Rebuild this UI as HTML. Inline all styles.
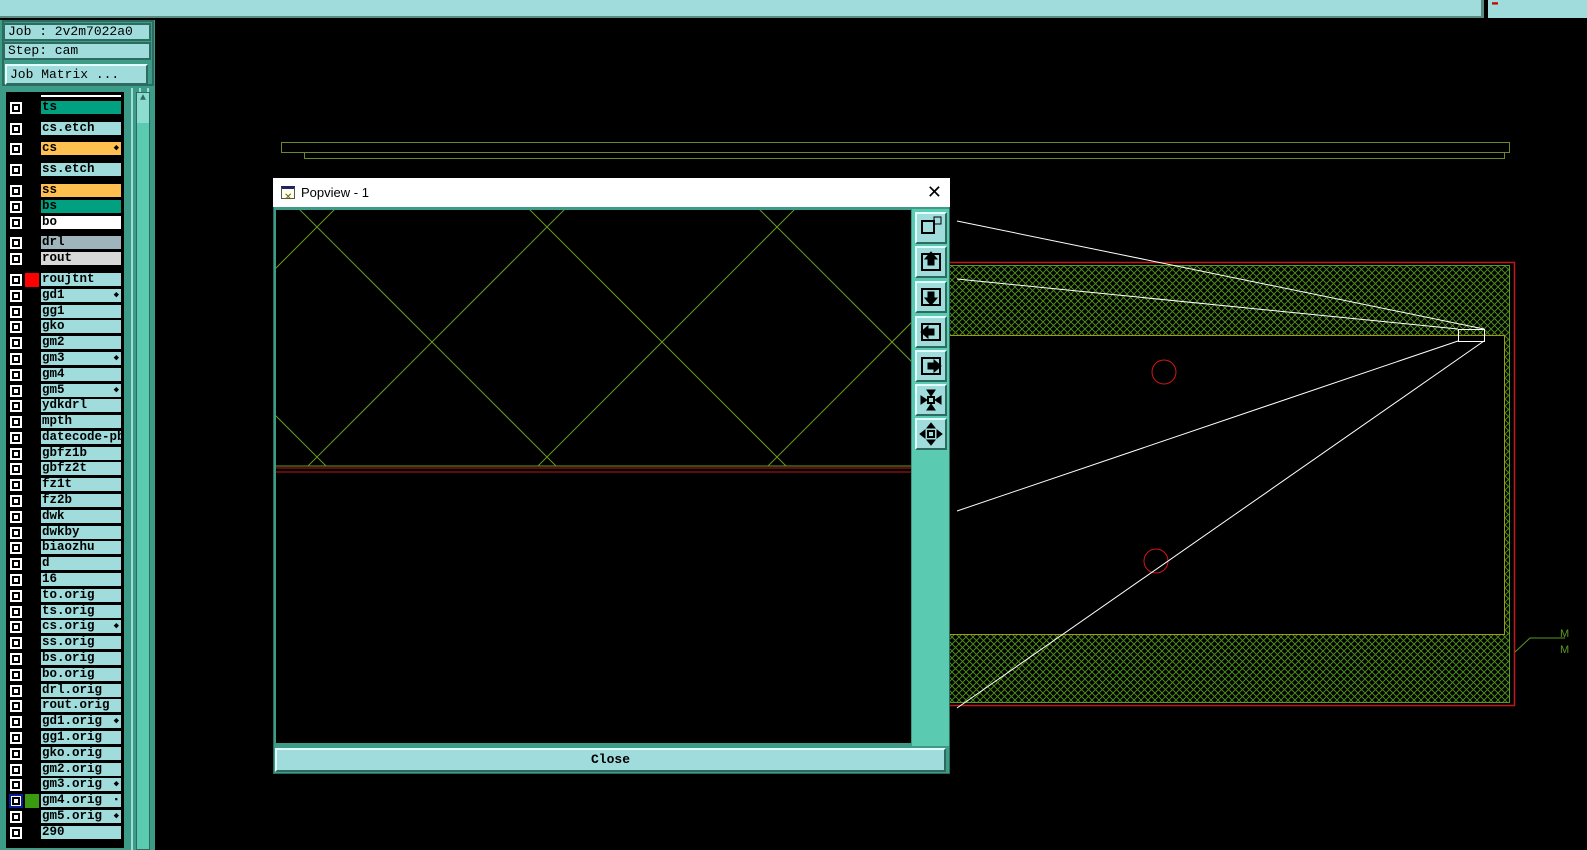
<!DOCTYPE html>
<html><head><meta charset="utf-8"><style>
*{margin:0;padding:0;box-sizing:border-box}
body{width:1587px;height:850px;background:#000;position:relative;overflow:hidden;font-family:"Liberation Mono",monospace;}
.a{position:absolute}
.top{left:0;top:0;width:1484px;height:18px;background:#a0dcdc;border-bottom:2px solid #5a8a84;border-right:3px solid #5a8a84}
.top2{left:1488px;top:0;width:99px;height:18px;background:#a0dcdc}
.lp{left:0;top:20px;width:155px;height:830px;background:#3c9c88}
.hdr{left:3px;width:148px;height:18px;background:#a0dcdc;border:2px solid #2d6b60;font-size:13px;line-height:14px;padding-left:3px;color:#000}
.row{left:9px;height:15px;width:114px}
.cb{position:absolute;left:0;top:1px;width:14px;height:14px;background:#fff;border:1px solid #000}
.cb i{position:absolute;left:2px;top:2px;width:8px;height:8px;border:2px solid #000;background:#fff}
.lb{position:absolute;left:31px;top:0;width:82px;height:15px;background:#a0dcdc;border:1px solid #000;font-size:12.5px;font-weight:bold;line-height:13px;padding-left:1px;white-space:nowrap;overflow:hidden}
.mk{position:absolute;right:2px;top:0;font-size:9px}
.btn{left:915px;width:32px;height:32px;background:#a0dcdc;border:2px solid;border-color:#e0ffff #2d6b60 #2d6b60 #e0ffff}
</style></head><body>
<div class="a top"></div><div class="a top2"><span style="position:absolute;left:4px;top:-2px;color:#c00;font-size:10px">▬</span></div>
<div class="a lp"></div>
<div class="a" style="left:2px;top:20px;width:152px;height:66px;background:#3c9c88;border:2px solid #2d6b60"></div>
<div class="a hdr" style="top:23px">Job : 2v2m7022a0</div>
<div class="a hdr" style="top:42px">Step: cam</div>
<div class="a" style="left:5px;top:64px;width:143px;height:21px;background:#a0dcdc;border:2px solid;border-color:#e0ffff #2d6b60 #2d6b60 #e0ffff;font-size:13px;line-height:17px;padding-left:3px">Job Matrix ...</div>
<div class="a" style="left:4px;top:90px;width:122px;height:760px;background:#000;border:2px solid #3c9c88"></div>
<div class="a" style="left:128px;top:88px;width:27px;height:762px;background:repeating-linear-gradient(90deg,#3c9c88 0 3px,#a0dcdc 3px 5px,#3c9c88 5px 8px)"></div>
<div class="a" style="left:136px;top:92px;width:14px;height:758px;background:#5acbb0;border:1px solid #2d6b60"></div>
<div class="a" style="left:137px;top:93px;width:12px;height:30px;background:#8cdcd0;font-size:10px;text-align:center;color:#2d6b60">▲</div>
<div class="a row" style="top:96px"><div class="lb" style="background:#fff;height:4px;top:-2px"></div></div>
<div class="a row" style="top:100px"><div class="cb"><i></i></div><div class="lb" style="background:#00a080">ts</div></div>
<div class="a row" style="top:121px"><div class="cb"><i></i></div><div class="lb">cs.etch</div></div>
<div class="a row" style="top:141px"><div class="cb"><i></i></div><div class="lb" style="background:#ffc050">cs<span class="mk">◆</span></div></div>
<div class="a row" style="top:162px"><div class="cb"><i></i></div><div class="lb">ss.etch</div></div>
<div class="a row" style="top:183px"><div class="cb"><i></i></div><div class="lb" style="background:#ffc050">ss</div></div>
<div class="a row" style="top:199px"><div class="cb"><i></i></div><div class="lb" style="background:#00a080">bs</div></div>
<div class="a row" style="top:215px"><div class="cb"><i></i></div><div class="lb" style="background:#fff">bo</div></div>
<div class="a row" style="top:235px"><div class="cb"><i></i></div><div class="lb" style="background:#a0b4bc">drl</div></div>
<div class="a row" style="top:251px"><div class="cb"><i></i></div><div class="lb" style="background:#d8d8d8">rout</div></div>
<div class="a row" style="top:272px"><div class="cb"><i></i></div><div style="position:absolute;left:16px;top:1px;width:14px;height:14px;background:#f00"></div><div class="lb">roujtnt</div></div>
<div class="a row" style="top:288px"><div class="cb"><i></i></div><div class="lb">gd1<span class="mk">◆</span></div></div>
<div class="a row" style="top:304px"><div class="cb"><i></i></div><div class="lb">gg1</div></div>
<div class="a row" style="top:319px"><div class="cb"><i></i></div><div class="lb">gko</div></div>
<div class="a row" style="top:335px"><div class="cb"><i></i></div><div class="lb">gm2</div></div>
<div class="a row" style="top:351px"><div class="cb"><i></i></div><div class="lb">gm3<span class="mk">◆</span></div></div>
<div class="a row" style="top:367px"><div class="cb"><i></i></div><div class="lb">gm4</div></div>
<div class="a row" style="top:383px"><div class="cb"><i></i></div><div class="lb">gm5<span class="mk">◆</span></div></div>
<div class="a row" style="top:398px"><div class="cb"><i></i></div><div class="lb">ydkdrl</div></div>
<div class="a row" style="top:414px"><div class="cb"><i></i></div><div class="lb">mpth</div></div>
<div class="a row" style="top:430px"><div class="cb"><i></i></div><div class="lb">datecode-pbe</div></div>
<div class="a row" style="top:446px"><div class="cb"><i></i></div><div class="lb">gbfz1b</div></div>
<div class="a row" style="top:461px"><div class="cb"><i></i></div><div class="lb">gbfz2t</div></div>
<div class="a row" style="top:477px"><div class="cb"><i></i></div><div class="lb">fz1t</div></div>
<div class="a row" style="top:493px"><div class="cb"><i></i></div><div class="lb">fz2b</div></div>
<div class="a row" style="top:509px"><div class="cb"><i></i></div><div class="lb">dwk</div></div>
<div class="a row" style="top:525px"><div class="cb"><i></i></div><div class="lb">dwkby</div></div>
<div class="a row" style="top:540px"><div class="cb"><i></i></div><div class="lb">biaozhu</div></div>
<div class="a row" style="top:556px"><div class="cb"><i></i></div><div class="lb">d</div></div>
<div class="a row" style="top:572px"><div class="cb"><i></i></div><div class="lb">16</div></div>
<div class="a row" style="top:588px"><div class="cb"><i></i></div><div class="lb">to.orig</div></div>
<div class="a row" style="top:604px"><div class="cb"><i></i></div><div class="lb">ts.orig</div></div>
<div class="a row" style="top:619px"><div class="cb"><i></i></div><div class="lb">cs.orig<span class="mk">◆</span></div></div>
<div class="a row" style="top:635px"><div class="cb"><i></i></div><div class="lb">ss.orig</div></div>
<div class="a row" style="top:651px"><div class="cb"><i></i></div><div class="lb">bs.orig</div></div>
<div class="a row" style="top:667px"><div class="cb"><i></i></div><div class="lb">bo.orig</div></div>
<div class="a row" style="top:683px"><div class="cb"><i></i></div><div class="lb">drl.orig</div></div>
<div class="a row" style="top:698px"><div class="cb"><i></i></div><div class="lb">rout.orig</div></div>
<div class="a row" style="top:714px"><div class="cb"><i></i></div><div class="lb">gd1.orig<span class="mk">◆</span></div></div>
<div class="a row" style="top:730px"><div class="cb"><i></i></div><div class="lb">gg1.orig</div></div>
<div class="a row" style="top:746px"><div class="cb"><i></i></div><div class="lb">gko.orig</div></div>
<div class="a row" style="top:762px"><div class="cb"><i></i></div><div class="lb">gm2.orig</div></div>
<div class="a row" style="top:777px"><div class="cb"><i></i></div><div class="lb">gm3.orig<span class="mk">◆</span></div></div>
<div class="a row" style="top:793px"><div class="cb" style="border:2px solid #0020a0"><i style="left:1px;top:1px"></i></div><div style="position:absolute;left:16px;top:1px;width:14px;height:14px;background:#3a9a10"></div><div class="lb">gm4.orig<span class="mk">▪</span></div></div>
<div class="a row" style="top:809px"><div class="cb"><i></i></div><div class="lb">gm5.orig<span class="mk">◆</span></div></div>
<div class="a row" style="top:825px"><div class="cb"><i></i></div><div class="lb">290</div></div>

<svg class="a" style="left:0;top:0" width="1587" height="850">
<defs><pattern id="h" width="7" height="7" patternUnits="userSpaceOnUse"><path d="M0 0L7 7M7 0L0 7" stroke="#4a8a1a" stroke-width="1"/></pattern></defs>
<rect x="281.5" y="142.5" width="1228" height="10" fill="none" stroke="#6a8a2a"/>
<rect x="304.5" y="152.5" width="1200" height="6" fill="none" stroke="#6a8a2a"/>
<rect x="948" y="265" width="562" height="70" fill="url(#h)"/>
<rect x="948" y="634" width="562" height="69" fill="url(#h)"/>
<rect x="1505" y="335" width="5" height="299" fill="url(#h)"/>
<rect x="948.5" y="262.5" width="566" height="443" fill="none" stroke="#c01818" stroke-width="1.5"/>
<rect x="948.5" y="265.5" width="561" height="437" fill="none" stroke="#5a9a20"/>
<path d="M948 335.5H1504.5V634.5H948" fill="none" stroke="#a09a10"/>
<circle cx="1164" cy="372" r="12" fill="none" stroke="#d01818"/>
<circle cx="1156" cy="561" r="12" fill="none" stroke="#d01818"/>
<rect x="1458.5" y="329.5" width="26" height="12" fill="none" stroke="#fff"/>
<g stroke="#fff" stroke-width="1"><path d="M957 221L1484 329M957 279L1458 329M957 511L1458 341M957 708L1484 341"/></g>
<path d="M1515 652L1530 638H1565" fill="none" stroke="#5a9a20"/>
<text x="1560" y="637" fill="#5a9a20" font-size="11" font-family="Liberation Sans">M</text>
<text x="1560" y="653" fill="#5a9a20" font-size="11" font-family="Liberation Sans">M</text>
</svg>

<div class="a" style="left:273px;top:178px;width:677px;height:596px;background:#3c9c88;border:1px solid #2d6b60"></div>
<div class="a" style="left:273px;top:178px;width:677px;height:29px;background:#fff;font-family:'Liberation Sans',sans-serif;font-size:13px;line-height:29px;padding-left:28px">Popview - 1
<div style="position:absolute;left:8px;top:8px;width:14px;height:13px;border:1px solid #555;background:#ffe;border-top:3px solid #226"><span style="position:absolute;left:2px;top:-6px;font-size:10px;color:#660">✕</span></div>
<span style="position:absolute;right:8px;top:0;font-size:18px">✕</span></div>
<svg class="a" style="left:276px;top:210px" width="635" height="533">
<rect width="635" height="533" fill="#000"/>
<defs><clipPath id="c"><rect width="635" height="256"/></clipPath></defs>
<g stroke="#6a9a2a" stroke-width="1" fill="none" clip-path="url(#c)">
<path d="M-300 -324L400 376M-70 -324L630 376M160 -324L860 376M390 -324L1090 376M-530 -324L170 376"/>
<path d="M-300 358L400 -342M-70 358L630 -342M160 588L860 -112M390 588L1090 -112M620 588L1320 -112M-70 588L630 -112"/>
</g>
<line x1="0" y1="256" x2="635" y2="256" stroke="#6a9a2a"/>
<line x1="0" y1="258" x2="635" y2="258" stroke="#c01818"/>
<line x1="0" y1="262" x2="635" y2="262" stroke="#c01818"/>
</svg>
<div class="a" style="left:912px;top:209px;width:37px;height:537px;background:#5acbb0"></div>
<div class="a btn" style="top:212px"></div>
<div class="a btn" style="top:246px"></div>
<div class="a btn" style="top:281px"></div>
<div class="a btn" style="top:316px"></div>
<div class="a btn" style="top:350px"></div>
<div class="a btn" style="top:384px"></div>
<div class="a btn" style="top:418px"></div>
<svg class="a" style="left:915px;top:212px" width="32" height="240" fill="#000" stroke="#000">
<g fill="none" stroke-width="2"><rect x="7" y="9" width="12" height="12"/><rect x="19" y="5" width="7" height="7" stroke-width="1"/></g>
<g transform="translate(0,34)"><rect x="7" y="8" width="18" height="16" fill="none" stroke-width="2"/><path d="M16 6L10 13H22Z M13 13h6v6h-6z"/></g>
<g transform="translate(0,69)"><rect x="7" y="8" width="18" height="16" fill="none" stroke-width="2"/><path d="M16 24L10 17H22Z M13 11h6v6h-6z"/></g>
<g transform="translate(0,104)"><rect x="7" y="8" width="18" height="16" fill="none" stroke-width="2"/><path d="M6 16L13 10V22Z M13 13h6v6h-6z"/></g>
<g transform="translate(0,138)"><rect x="7" y="8" width="18" height="16" fill="none" stroke-width="2"/><path d="M26 16L19 10V22Z M13 13h6v6h-6z"/></g>
<g transform="translate(0,172)"><rect x="13" y="13" width="6" height="6" fill="none" stroke-width="2"/><path d="M16 12L12 6H20Z M16 20L12 26H20Z M12 16L6 12V20Z M20 16L26 12V20Z"/></g>
<g transform="translate(0,206)"><rect x="13" y="13" width="6" height="6" fill="none" stroke-width="2"/><path d="M16 5L12 10H20Z M16 27L12 22H20Z M5 16L10 12V20Z M27 16L22 12V20Z"/></g>
</svg>
<div class="a" style="left:275px;top:748px;width:671px;height:24px;background:#a0dcdc;border:2px solid;border-color:#e0ffff #2d6b60 #2d6b60 #e0ffff;text-align:center;font-size:13px;font-weight:bold;line-height:20px">Close</div>
</body></html>
